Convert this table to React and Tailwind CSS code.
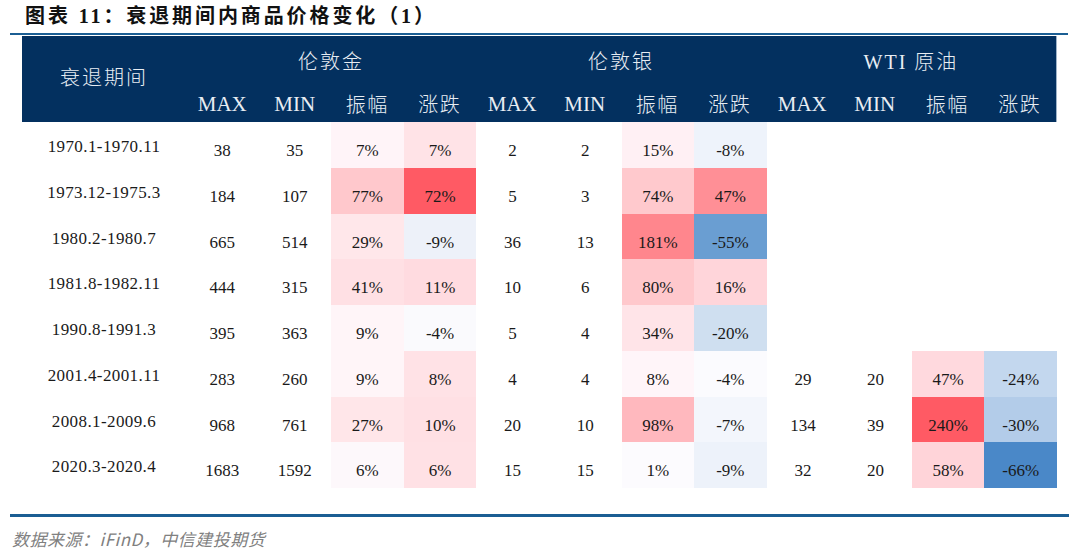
import React from "react";

const rows = [
  { d: "1970.1-1970.11", g: ["38", "35", "7%", "bg-[#fff4f8]", "7%", "bg-[#ffe3e7]"], s: ["2", "2", "15%", "bg-[#fff0f4]", "-8%", "bg-[#eef3fb]"], w: null },
  { d: "1973.12-1975.3", g: ["184", "107", "77%", "bg-[#ffc8cc]", "72%", "bg-[#ff5a64]"], s: ["5", "3", "74%", "bg-[#ffc9cd]", "47%", "bg-[#ff8f96]"], w: null },
  { d: "1980.2-1980.7", g: ["665", "514", "29%", "bg-[#ffe7ea]", "-9%", "bg-[#edf1f9]"], s: ["36", "13", "181%", "bg-[#ff868d]", "-55%", "bg-[#6a9ed2]"], w: null },
  { d: "1981.8-1982.11", g: ["444", "315", "41%", "bg-[#ffe0e4]", "11%", "bg-[#ffdbe0]"], s: ["10", "6", "80%", "bg-[#ffc8cc]", "16%", "bg-[#ffd5da]"], w: null },
  { d: "1990.8-1991.3", g: ["395", "363", "9%", "bg-[#fff5f8]", "-4%", "bg-[#fafafd]"], s: ["5", "4", "34%", "bg-[#ffe4e8]", "-20%", "bg-[#cfdff0]"], w: null },
  { d: "2001.4-2001.11", g: ["283", "260", "9%", "bg-[#fff5f8]", "8%", "bg-[#ffe2e6]"], s: ["4", "4", "8%", "bg-[#fff5f9]", "-4%", "bg-[#fbfbfe]"], w: ["29", "20", "47%", "bg-[#ffd9de]", "-24%", "bg-[#c3d7ee]"] },
  { d: "2008.1-2009.6", g: ["968", "761", "27%", "bg-[#ffe6e9]", "10%", "bg-[#ffe0e4]"], s: ["20", "10", "98%", "bg-[#ffb8be]", "-7%", "bg-[#f3f6fc]"], w: ["134", "39", "240%", "bg-[#ff5a64]", "-30%", "bg-[#b3cce9]"] },
  { d: "2020.3-2020.4", g: ["1683", "1592", "6%", "bg-[#fdf8fb]", "6%", "bg-[#ffe1e5]"], s: ["15", "15", "1%", "bg-[#fcfbfe]", "-9%", "bg-[#edf2fa]"], w: ["32", "20", "58%", "bg-[#ffd4d9]", "-66%", "bg-[#4a88c8]"] },
];

function Cell({ v, bg = "" }) {
  return (
    <div className={`flex items-center justify-center pt-[12px] ${bg}`}>{v}</div>
  );
}

function Group({ data }) {
  if (!data) {
    return (
      <>
        <div />
        <div />
        <div />
        <div />
      </>
    );
  }
  return (
    <>
      <Cell v={data[0]} />
      <Cell v={data[1]} />
      <Cell v={data[2]} bg={data[3]} />
      <Cell v={data[4]} bg={data[5]} />
    </>
  );
}

const subs = ["MAX", "MIN", "振幅", "涨跌"];

export default function App() {
  return (
    <div
      className="w-[1080px] h-[554px] bg-white overflow-hidden text-[#1a1a1a]"
      style={{ fontFamily: '"Liberation Serif", "Noto Sans CJK SC", serif' }}
    >
      <div className="h-[33px] pl-[25px] pt-[3px] text-[20px] leading-[26px] font-bold tracking-[2.9px] text-[#111]">
        图表 11：衰退期间内商品价格变化（1）
      </div>
      <div className="ml-[10px] w-[1058px] h-[2px] bg-[#1b5e93]" />
      <div className="ml-[22px] mt-[1px] w-[1035px]">
        <div className="h-[86px] bg-[#03305f] border-r border-[#9fb3c8] flex text-[#e8edf3]">
          <div className="w-[164px] flex items-center justify-center text-[20px] tracking-[2px] font-light pb-[2px]">
            衰退期间
          </div>
          <div className="flex-1 flex flex-col">
            <div className="h-[52px] grid grid-cols-3 items-center text-center text-[20px] tracking-[2px] font-light">
              <div>伦敦金</div>
              <div>伦敦银</div>
              <div>WTI 原油</div>
            </div>
            <div className="h-[34px] grid grid-cols-12 items-center text-center">
              {[0, 1, 2].map((g) =>
                subs.map((s, i) => (
                  <div
                    key={g + "-" + i}
                    className={i < 2 ? "text-[21px]" : "text-[20px] tracking-[1.5px] font-light"}
                  >
                    {s}
                  </div>
                ))
              )}
            </div>
          </div>
        </div>
        <div className="text-[17px]">
          {rows.map((r) => (
            <div key={r.d} className="h-[45.75px] grid grid-cols-[164px_repeat(12,1fr)]">
              <div className="flex items-center justify-center pt-[4px] tracking-[0.4px]">{r.d}</div>
              <Group data={r.g} />
              <Group data={r.s} />
              <Group data={r.w} />
            </div>
          ))}
        </div>
      </div>
      <div className="ml-[10px] mt-[26px] w-[1059px] h-[3px] bg-[#1b5e93]" />
      <div
        className="pl-[12px] mt-[10px] text-[17px] leading-[24px] italic text-[#808080] tracking-[0.5px]"
        style={{ fontFamily: '"Noto Sans CJK SC", sans-serif' }}
      >
        数据来源：iFinD，中信建投期货
      </div>
    </div>
  );
}
